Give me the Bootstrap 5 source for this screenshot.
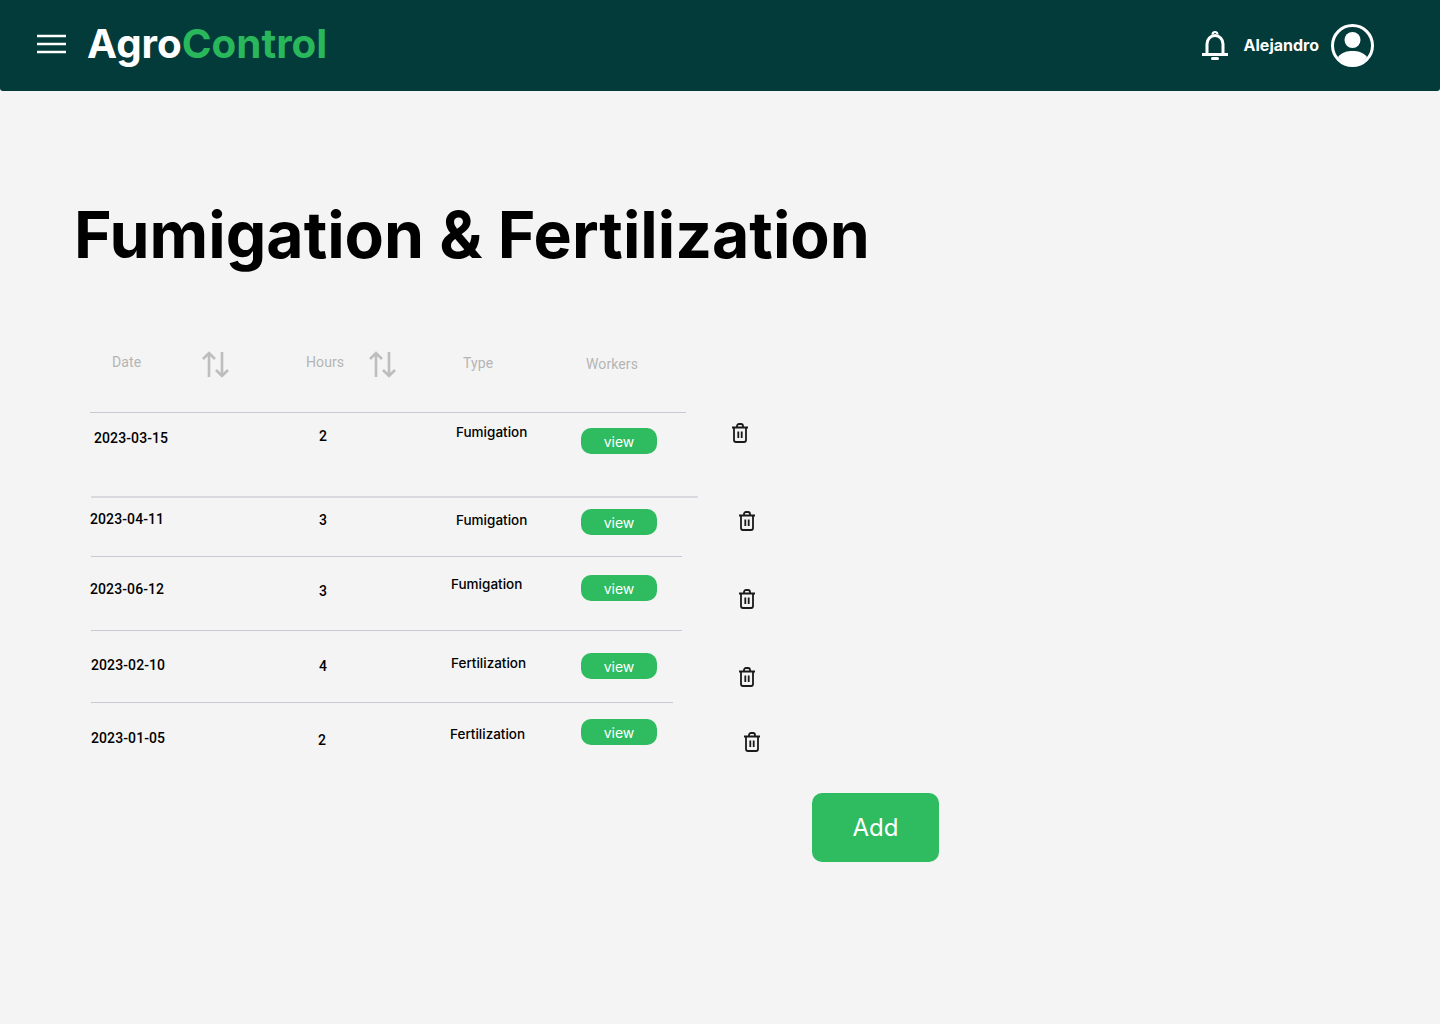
<!DOCTYPE html>
<html lang="en">
<head>
    <meta charset="UTF-8">
    <meta name="viewport" content="width=device-width, initial-scale=1.0">
    <title>AgroControl - Fumigation &amp; Fertilization</title>
    <link rel="stylesheet" href="https://cdn.jsdelivr.net/npm/bootstrap@5.3.0/dist/css/bootstrap.min.css">
    <script src="https://cdn.jsdelivr.net/npm/bootstrap@5.3.0/dist/js/bootstrap.bundle.min.js"></script>
    <style>
        body {
            background-color: #f4f4f4;
            font-family: Inter, "Liberation Sans", sans-serif;
            color: #000;
        }
        .top-bar {
            height: 91px;
            background-color: #033a3a;
            border-radius: 0 0 3px 3px;
            padding: 0 66px 0 37px;
        }
        .menu-icon { width: 29px; height: 20px; margin-top: -4px; }
        .logo {
            margin: -4px 0 0 21px;
            font-size: 40.3px;
            line-height: 48px;
            font-weight: 700;
            color: #fff;
            padding: 0;
        }
        .logo:hover { color: #fff; }
        .logo span { color: #29b75c; }
        .user-name { font-size: 16px; font-weight: 700; color: #fff; margin: -2px 12px 0 15px; }
        .bell-icon { width: 28px; height: 31px; }
        .user-icon { width: 43px; height: 43px; }
        .page-title {
            font-size: 64.3px;
            line-height: 78px;
            font-weight: 700;
            margin: 105px 0 0 74px;
        }
        .sheet { margin: 71px 0 0 90px; width: 860px; }
        .head-row { height: 67px; padding-top: 6px; color: #b5b5b5; font-family: Roboto, sans-serif; font-size: 14px; letter-spacing: .1px; }
        .head-date { margin: 1px 0 0 22px; width: 90px; }
        .head-arrow { width: 27px; height: 27px; }
        .head-hours { margin: 1px 0 0 77px; width: 63px; }
        .head-type { margin: 2px 0 0 67px; width: 123px; }
        .head-workers { margin-top: 3px; }
        .data-row { font-size: 14px; font-weight: 500; line-height: 20px; }
        .row-line { height: 1px; background-color: #c9c9d6; }
        .row-cells { display: grid; grid-template-columns: 228px 133px 130px 150px 40px; }
        .view-btn {
            width: 76px;
            height: 26px;
            padding: 0;
            border: 0;
            border-radius: 10px;
            background-color: #2fbb60;
            color: #fff;
            font-size: 14px;
            line-height: 28px;
            font-weight: 400;
        }
        .trash-icon { width: 18px; height: 20px; display: block; }
        .cell-date, .cell-hours { font-family: Roboto, sans-serif; font-size: 14px; font-weight: 500; letter-spacing: .1px; }
        .cell-type { font-size: 13.5px; }
        .cell-date { padding: var(--date-y) 0 0 var(--date-x); }
        .cell-hours { padding: var(--hours-y) 0 0 var(--hours-x); }
        .cell-type { padding-top: var(--type-y); margin-left: var(--type-x); }
        .cell-view { padding-top: var(--view-y); }
        .cell-trash { padding: var(--trash-y) 0 0 var(--trash-x); }
        .row-a { height: 85px; --date-y: 15px; --date-x: 4px; --hours-y: 13px; --hours-x: 1px; --type-y: 9px; --type-x: 5px; --view-y: 15px; --trash-y: 10px; --trash-x: 0px; }
        .row-a .row-line { width: 596px; }
        .row-b { height: 60px; --date-y: 11px; --date-x: 0px; --hours-y: 12px; --hours-x: 1px; --type-y: 12px; --type-x: 5px; --view-y: 11px; --trash-y: 13px; --trash-x: 7px; }
        .row-b .row-line { width: 607px; margin: -1px 0 0 1px; background-color: #d9d9e0; height: 2px; }
        .row-c { height: 74px; --date-y: 22px; --date-x: 0px; --hours-y: 24px; --hours-x: 1px; --type-y: 17px; --type-x: 0px; --view-y: 18px; --trash-y: 32px; --trash-x: 7px; }
        .row-c .row-line { width: 591px; margin-left: 1px; }
        .row-d { height: 72px; --date-y: 24px; --date-x: 1px; --hours-y: 25px; --hours-x: 1px; --type-y: 22px; --type-x: 0px; --view-y: 22px; --trash-y: 36px; --trash-x: 7px; }
        .row-d .row-line { width: 591px; margin-left: 1px; }
        .row-e { height: 91px; --date-y: 25px; --date-x: 1px; --hours-y: 27px; --hours-x: 0px; --type-y: 21px; --type-x: -1px; --view-y: 16px; --trash-y: 29px; --trash-x: 12px; }
        .row-e .row-line { width: 582px; margin-left: 1px; }
        .add-btn {
            display: block;
            width: 127px;
            height: 69px;
            margin-left: 722px;
            padding: 0;
            border: 0;
            border-radius: 10px;
            background-color: #2fbb60;
            color: #fff;
            font-size: 24px;
            font-weight: 400;
        }
    </style>
</head>
<body>
    <!-- Top bar -->
    <nav class="navbar top-bar d-flex justify-content-between align-items-center flex-nowrap">
        <div class="d-flex align-items-center">
            <svg class="menu-icon" viewBox="0 0 29 20" fill="none" stroke="#fff" stroke-width="2.4">
                <path d="M0 2h29M0 10h29M0 18h29"/>
            </svg>
            <a class="navbar-brand logo" href="#">Agro<span>Control</span></a>
        </div>
        <div class="d-flex align-items-center">
            <svg class="bell-icon" viewBox="0 0 28 31" fill="none" stroke="#fff" stroke-width="3">
                <path d="M6 24V14A8 8.500 0 0 1 22 14V24"/>
                <path d="M1 24.500h26"/>
                <path d="M11.500 4.500a2.500 2.500 0 0 1 5 0" stroke-width="2"/>
                <path d="M11.500 28.500h5" stroke-linecap="round"/>
            </svg>
            <span class="user-name">Alejandro</span>
            <svg class="user-icon" viewBox="0 0 43 43">
                <circle cx="21.5" cy="21.5" r="20" fill="none" stroke="#fff" stroke-width="3"/>
                <circle cx="21.5" cy="16" r="8" fill="#fff"/>
                <path d="M7 33C11 28 16 27 21.5 27S32 28 36 33C32.500 38 27 41 21.500 41S10.500 38 7 33Z" fill="#fff"/>
            </svg>
        </div>
    </nav>

    <h1 class="page-title">Fumigation &amp; Fertilization</h1>

    <div class="sheet">
        <div class="head-row d-flex align-items-start">
            <span class="head-date">Date</span>
            <svg class="head-arrow" viewBox="0 0 27 27" fill="none" stroke="#bdbdbd" stroke-width="2.6"><path d="M7 26V2M1 8l6-6 6 6M20 1v24M14 19l6 6 6-6"/></svg>
            <span class="head-hours">Hours</span>
            <svg class="head-arrow" viewBox="0 0 27 27" fill="none" stroke="#bdbdbd" stroke-width="2.6"><path d="M7 26V2M1 8l6-6 6 6M20 1v24M14 19l6 6 6-6"/></svg>
            <span class="head-type">Type</span>
            <span class="head-workers">Workers</span>
        </div>

        <div id="rows"></div>

        <button type="button" class="btn add-btn">Add</button>
    </div>

    <script>
        // Rows of the list
        const records = [
            { date: "2023-03-15", hours: 2, type: "Fumigation", cls: "row-a" },
            { date: "2023-04-11", hours: 3, type: "Fumigation", cls: "row-b" },
            { date: "2023-06-12", hours: 3, type: "Fumigation", cls: "row-c" },
            { date: "2023-02-10", hours: 4, type: "Fertilization", cls: "row-d" },
            { date: "2023-01-05", hours: 2, type: "Fertilization", cls: "row-e" }
        ];

        const trashIcon = `<svg class="trash-icon" viewBox="0 0 18 20" fill="none" stroke="#1a1a1a" stroke-width="1.8">
            <path d="M1 4.500h16M3 4.500V17a2 2 0 0 0 2 2h8a2 2 0 0 0 2-2V4.500M6 4.500V3a2 2 0 0 1 2-2h2a2 2 0 0 1 2 2v1.500M7.300 8.500v6.500M10.700 8.500v6.500"/>
        </svg>`;

        document.getElementById("rows").innerHTML = records.map(r => `
            <div class="data-row ${r.cls}">
                <div class="row-line"></div>
                <div class="row-cells">
                    <div class="cell-date">${r.date}</div>
                    <div class="cell-hours">${r.hours}</div>
                    <div class="cell-type">${r.type}</div>
                    <div class="cell-view"><button type="button" class="btn view-btn">view</button></div>
                    <div class="cell-trash">${trashIcon}</div>
                </div>
            </div>`).join("");
    </script>
</body>
</html>
